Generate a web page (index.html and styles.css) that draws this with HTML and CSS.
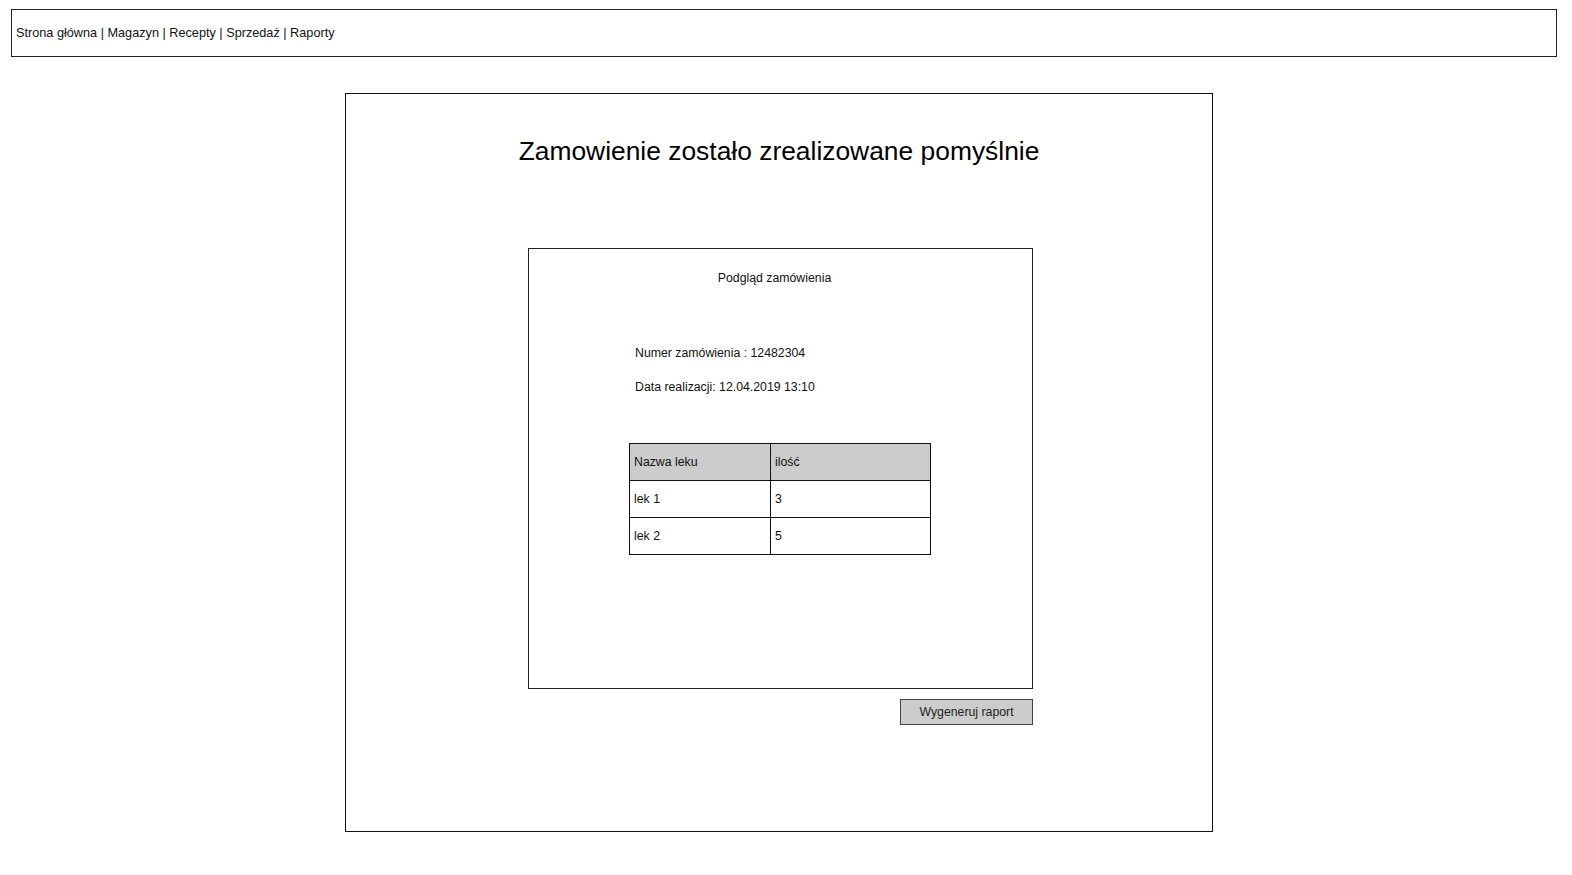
FILE: index.html
```html
<!DOCTYPE html>
<html lang="pl">
<head>
<meta charset="utf-8">
<title>Zamówienie</title>
<link rel="stylesheet" href="styles.css">
</head>
<body>
<nav class="nav">Strona główna | Magazyn | Recepty | Sprzedaż | Raporty</nav>
<main class="panel">
  <h1 class="title">Zamowienie zostało zrealizowane pomyślnie</h1>
  <section class="preview">
    <div class="preview-title">Podgląd zamówienia</div>
    <div class="info">
      <p class="info-line">Numer zamówienia : 12482304</p>
      <p class="info-line">Data realizacji: 12.04.2019 13:10</p>
    </div>
    <table class="grid">
      <thead>
        <tr><th class="c1">Nazwa leku</th><th class="c2">ilość</th></tr>
      </thead>
      <tbody>
        <tr><td>lek 1</td><td>3</td></tr>
        <tr><td>lek 2</td><td>5</td></tr>
      </tbody>
    </table>
  </section>
  <div class="actions">
    <button class="btn">Wygeneruj raport</button>
  </div>
</main>
</body>
</html>
```
FILE: styles.css
```css
html, body {
  margin: 0;
  background: #fff;
}
body {
  padding: 9px 0 0 11px;
  font-family: "Liberation Sans", Arial, sans-serif;
  color: #111;
}
.nav {
  box-sizing: border-box;
  width: 1546px;
  height: 48px;
  border: 1px solid #222;
  display: flex;
  align-items: center;
  padding-left: 4px;
  font-size: 12.7px;
}
.panel {
  box-sizing: border-box;
  margin: 36px 0 0 334px;
  width: 868px;
  height: 739px;
  border: 1px solid #111;
  display: flex;
  flex-direction: column;
}
.title {
  margin: 38px 0 0 0;
  height: 38px;
  line-height: 38px;
  text-align: center;
  font-weight: normal;
  font-size: 26.4px;
  color: #000;
}
.preview {
  box-sizing: border-box;
  margin: 78px 0 0 182px;
  width: 505px;
  height: 441px;
  border: 1px solid #222;
  display: flex;
  flex-direction: column;
  align-items: flex-start;
}
.preview-title {
  align-self: stretch;
  margin-top: 20px;
  height: 18px;
  line-height: 18px;
  text-align: center;
  font-size: 12.3px;
  padding-right: 12px;
}
.info {
  margin: 57px 0 0 106px;
  display: flex;
  flex-direction: column;
  gap: 16px;
}
.info-line {
  margin: 0;
  height: 18px;
  line-height: 18px;
  font-size: 12.3px;
}
.grid {
  margin: 47px 0 0 100px;
  width: 301px;
  table-layout: fixed;
  border-collapse: collapse;
  font-size: 12.3px;
}
.grid th, .grid td {
  box-sizing: border-box;
  border: 1px solid #111;
  height: 37px;
  padding: 0 4px;
  text-align: left;
  font-weight: normal;
}
.grid th {
  background: #cccccc;
}
.grid .c1 { width: 141px; }
.grid .c2 { width: 160px; }
.actions {
  display: flex;
  justify-content: flex-end;
  width: 687px;
  margin-top: 10px;
}
.btn {
  box-sizing: border-box;
  width: 133px;
  height: 26px;
  background: #cccccc;
  border: 1px solid #444;
  font-family: inherit;
  font-size: 12.3px;
  color: #222;
  padding: 0;
}
```
